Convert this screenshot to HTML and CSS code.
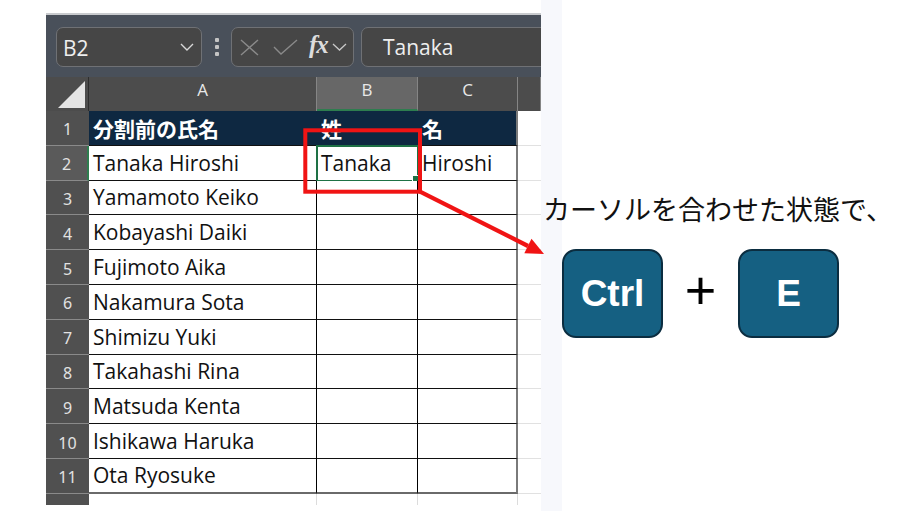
FILE: index.html
```html
<!DOCTYPE html>
<html lang="ja">
<head>
    <meta charset="UTF-8">
    <title>Ctrl+E フラッシュフィル</title>
    <link rel="stylesheet" href="styles.css">
</head>
<body>
    <div class="sheet">
        <div class="toolbar">
            <div class="namebox">
                <span>B2</span>
                <svg class="chev" width="14" height="8" viewBox="0 0 14 8"><path d="M1 1l6 6 6-6" fill="none" stroke="#d8d8d8" stroke-width="1.4"/></svg>
            </div>
            <div class="grip"><i></i><i></i><i></i></div>
            <div class="fxbox">
                <svg width="19" height="17" viewBox="0 0 19 17"><path d="M1 1l17 15M18 1L1 16" stroke="#8a8a8a" stroke-width="1.4" fill="none"/></svg>
                <svg width="25" height="17" viewBox="0 0 25 17"><path d="M1 8l7 7L24 1" stroke="#8a8a8a" stroke-width="1.4" fill="none"/></svg>
                <span class="fx">fx</span>
                <svg width="15" height="8" viewBox="0 0 15 8"><path d="M1 1l6.5 6 6.5-6" fill="none" stroke="#c8c8c8" stroke-width="1.3"/></svg>
            </div>
            <div class="formula">Tanaka</div>
        </div>

        <div class="grid">
            <div class="row colhead">
                <div class="corner"><span class="tri"></span></div>
                <div class="ch">A</div>
                <div class="ch sel">B</div>
                <div class="ch">C</div>
                <div class="ch"></div>
            </div>
            <div class="row title">
                <div class="rh">1</div>
                <div class="c">分割前の氏名</div>
                <div class="c colb">姓</div>
                <div class="c last">名</div>
                <div class="c out"></div>
            </div>
            <div class="row">
                <div class="rh act">2</div>
                <div class="c">Tanaka Hiroshi</div>
                <div class="c picked">Tanaka<span class="handle"></span></div>
                <div class="c last">Hiroshi</div>
                <div class="c out"></div>
            </div>
            <div class="row"><div class="rh">3</div><div class="c">Yamamoto Keiko</div><div class="c"></div><div class="c last"></div><div class="c out"></div></div>
            <div class="row"><div class="rh">4</div><div class="c">Kobayashi Daiki</div><div class="c"></div><div class="c last"></div><div class="c out"></div></div>
            <div class="row"><div class="rh">5</div><div class="c">Fujimoto Aika</div><div class="c"></div><div class="c last"></div><div class="c out"></div></div>
            <div class="row"><div class="rh">6</div><div class="c">Nakamura Sota</div><div class="c"></div><div class="c last"></div><div class="c out"></div></div>
            <div class="row"><div class="rh">7</div><div class="c">Shimizu Yuki</div><div class="c"></div><div class="c last"></div><div class="c out"></div></div>
            <div class="row"><div class="rh">8</div><div class="c">Takahashi Rina</div><div class="c"></div><div class="c last"></div><div class="c out"></div></div>
            <div class="row"><div class="rh">9</div><div class="c">Matsuda Kenta</div><div class="c"></div><div class="c last"></div><div class="c out"></div></div>
            <div class="row"><div class="rh">10</div><div class="c">Ishikawa Haruka</div><div class="c"></div><div class="c last"></div><div class="c out"></div></div>
            <div class="row end"><div class="rh">11</div><div class="c">Ota Ryosuke</div><div class="c"></div><div class="c last"></div><div class="c out"></div></div>
            <div class="row blank"><div class="rh"></div><div class="c"></div><div class="c"></div><div class="c"></div><div class="c out"></div></div>
        </div>
    </div>

    <div class="side">
        <p class="note">カーソルを合わせた状態で、</p>
        <div class="keys">
            <div class="key">Ctrl</div>
            <div class="plus">+</div>
            <div class="key">E</div>
        </div>
    </div>

    <!-- red callout over the sheet -->
    <svg class="marks" width="904" height="511" viewBox="0 0 904 511">
        <rect x="305.3" y="130.3" width="114.7" height="61.4" fill="none" stroke="#f01414" stroke-width="4"/>
        <path d="M420 191.7L528 246" stroke="#f01414" stroke-width="4.2" fill="none"/>
        <polygon points="544,254 524.3,253.2 531.5,238.8" fill="#f01414"/>
    </svg>
</body>
</html>
```

FILE: styles.css
```css
body { margin: 0; width: 904px; height: 511px; background: #fff; display: flex; align-items: flex-start; position: relative; overflow: hidden; font-family: "Open Sans", "Noto Sans CJK JP", sans-serif; }

.sheet { margin: 13px 0 0 46px; width: 495px; height: 492px; overflow: hidden; background: #4f4f4f; display: flex; flex-direction: column; flex: none; }

.toolbar { height: 64px; flex: none; box-sizing: border-box; padding: 14px 0 0 10px; background: #49505a; border-top: 2px solid #c9cbce; display: flex; align-items: flex-start; color: #eee; }
.toolbar > div { flex: none; }
.namebox { width: 146px; height: 40px; box-sizing: border-box; border: 1px solid #6f7175; border-radius: 7px; background: #464646; display: flex; align-items: center; justify-content: space-between; padding: 0 7px 0 6px; font-size: 21px; margin-top: -2px; }
.namebox span { line-height: 1; padding-top: 2px; }
.grip { width: 29px; height: 40px; margin-top: -2px; display: flex; flex-direction: column; align-items: center; justify-content: center; gap: 3px; }
.grip i { width: 4px; height: 4px; border-radius: 1px; background: #c4c4c4; }
.fxbox { width: 123px; height: 40px; margin-top: -2px; box-sizing: border-box; border: 1px solid #6f7175; border-radius: 7px; background: #464646; display: flex; align-items: center; padding-left: 8px; }
.fxbox svg:nth-child(2) { margin-left: 14px; }
.fx { font-family: "Liberation Serif", serif; font-style: italic; font-weight: bold; font-size: 25px; color: #dcdcdc; margin: -4px 4px 0 11px; letter-spacing: -1px; }
.formula { width: 200px; height: 40px; margin: -2px 0 0 7px; box-sizing: border-box; border: 1px solid #6f7175; border-radius: 7px; background: #464646; font-size: 21px; line-height: 38px; padding-left: 21px; color: #eee; }

.grid { display: flex; flex-direction: column; }
.row { display: grid; grid-template-columns: 43px 228px 101px 100px 23px; height: 34.8px; }
.row > div { box-sizing: border-box; }

.colhead { height: 34px; background: #4c4c4c; }
.corner { position: relative; border-right: 1px solid #2e2e2e; }
.tri { position: absolute; right: 3px; bottom: 3px; width: 0; height: 0; border-left: 27px solid transparent; border-bottom: 27px solid #e4e4e4; }
.ch { border-right: 1px solid #858585; color: #e8e8e8; font-size: 17px; line-height: 26px; text-align: center; }
.ch.sel { background: #676767; border-bottom: 2px solid #2e7d4f; }

.rh { background: #505050; border-bottom: 1px solid #8a8a8a; color: #e2e2e2; font-family: "Noto Sans", sans-serif; font-size: 16px; display: flex; align-items: center; justify-content: center; padding-top: 3px; }
.rh.act { background: #5a5a5a; border-right: 2px solid #2e7d4f; }

.c { background: #fff; border-right: 1px solid #000; border-bottom: 1px solid #111; color: #111; font-size: 21px; padding-left: 4px; display: flex; align-items: center; white-space: nowrap; position: relative; }
.c.last { border-right: 2px solid #7a7a7a; }
.c.out { border-right: none; border-bottom: 1px solid #e1e1e1; }

.title .c { background: #0e2841; color: #fff; font-family: "Noto Sans CJK JP", sans-serif; font-weight: bold; font-size: 21px; border-right-color: #0e2841; }
.title .c.last { border-right: 2px solid #7a7a7a; }
.title .c.out { background: #fff; border-right: none; }

.picked { outline: 2px solid #1e7145; outline-offset: -1px; }
.handle { position: absolute; right: -3px; bottom: -3px; width: 6px; height: 6px; background: #1e7145; border: 1px solid #fff; }

.end .c { border-bottom: 2px solid #6a6a6a; }
.end .c.out { border-bottom: 1px solid #e1e1e1; }
.blank .c { border-right: 1px solid #dcdcdc; border-bottom: none; }
.blank .c.out { border-right: none; }
.blank .rh { border-bottom: none; }

.side { flex: 1; height: 511px; background: linear-gradient(to right, #f7f8fc 21px, #fff 21px); padding-left: 2px; }
.note { margin: 191px 0 0; font-family: "Noto Sans CJK JP", sans-serif; font-size: 27px; line-height: 1.3; color: #111; }
.keys { display: flex; align-items: center; margin: 23px 0 0 19px; }
.key { width: 101px; height: 89px; box-sizing: border-box; background: #156082; border: 2px solid #0b2d40; border-radius: 14px; color: #fff; font-family: "Liberation Sans", sans-serif; font-weight: bold; font-size: 37px; display: flex; align-items: center; justify-content: center; }
.plus { width: 75px; text-align: center; font-family: "Liberation Sans", sans-serif; font-size: 54px; line-height: 1; color: #000; margin-top: -8px; }

.marks { position: absolute; left: 0; top: 0; pointer-events: none; }
```
